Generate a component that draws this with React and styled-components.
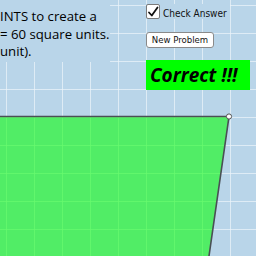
import React from "react";
import styled, { createGlobalStyle } from "styled-components";

const Global = createGlobalStyle`
  html, body { margin: 0; padding: 0; }
  body { width: 256px; height: 256px; overflow: hidden; background: #b9d5e9; }
`;

const Stage = styled.div`
  position: relative;
  width: 256px;
  height: 256px;
  overflow: hidden;
  background-color: #b9d5e9;
  background-image:
    linear-gradient(to right, rgba(235, 244, 250, 0.75) 1.5px, transparent 1.5px),
    linear-gradient(to bottom, rgba(235, 244, 250, 0.75) 1.5px, transparent 1.5px);
  background-size: 28px 28px;
  background-position: 6px 5px;
  font-family: "Open Sans", "Liberation Sans", sans-serif;
`;

const Drawing = styled.svg`
  position: absolute;
  inset: 0;
`;

const Overlay = styled.div`
  position: relative;
  display: flex;
  align-items: flex-start;
`;

const TextPanel = styled.div`
  width: 110px;
  height: 62px;
  box-sizing: border-box;
  padding-top: 8px;
  background: #b9d5e9;
  color: #000;
  font-size: 13.2px;
  line-height: 17.5px;
  white-space: nowrap;
  overflow: hidden;
`;

const Controls = styled.div`
  margin-left: 36px;
  padding-top: 4px;
  display: flex;
  flex-direction: column;
  align-items: flex-start;
`;

const CheckRow = styled.label`
  display: flex;
  align-items: center;
  gap: 3px;
  height: 15px;
  background: #b9d5e9;
  font-family: "DejaVu Sans Condensed", "DejaVu Sans", sans-serif;
  font-stretch: condensed;
  font-size: 10px;
  color: #111;
  padding-right: 3px;
`;

const Label = styled.span`
  padding-top: 3px;
`;

const Box = styled.span`
  width: 12px;
  height: 13px;
  border: 1px solid #7a7a7a;
  border-radius: 2px;
  background: #fff;
  display: flex;
  align-items: center;
  justify-content: center;
`;

const Button = styled.button`
  margin-top: 13px;
  width: 68px;
  height: 16px;
  padding: 0;
  border: 1px solid #8a8a8a;
  border-radius: 3px;
  background: #fff;
  font-family: "DejaVu Sans Condensed", "DejaVu Sans", sans-serif;
  font-stretch: condensed;
  font-size: 9.5px;
  color: #111;
  line-height: 14px;
`;

const Correct = styled.div`
  margin-top: 12px;
  width: 104px;
  height: 30px;
  background: #00ff00;
  box-sizing: border-box;
  padding-left: 4px;
  font-weight: bold;
  font-style: italic;
  font-size: 19px;
  line-height: 30px;
  color: #000;
  white-space: nowrap;
`;

export default function App() {
  return (
    <>
      <Global />
      <Stage>
        <Drawing width="256" height="256" viewBox="0 0 256 256">
          <polygon
            points="-10,116.5 229,116.5 207,270 -10,270"
            fill="#00ff00"
            fillOpacity="0.56"
            stroke="#4a4f55"
            strokeWidth="1.6"
          />
          <circle cx="229" cy="116.5" r="2.6" fill="#fff" stroke="#555" strokeWidth="1" />
        </Drawing>
        <Overlay>
          <TextPanel>
            <div>INTS to create a</div>
            <div>= 60 square units.</div>
            <div>unit).</div>
          </TextPanel>
          <Controls>
            <CheckRow>
              <Box>
                <svg width="12" height="12" viewBox="0 0 12 12">
                  <path d="M2 6.5 L4.8 9.5 L10.5 1.5" fill="none" stroke="#111" strokeWidth="1.8" strokeLinecap="round" strokeLinejoin="round" />
                </svg>
              </Box>
              <Label>Check Answer</Label>
            </CheckRow>
            <Button>New Problem</Button>
            <Correct>Correct !!!</Correct>
          </Controls>
        </Overlay>
      </Stage>
    </>
  );
}
